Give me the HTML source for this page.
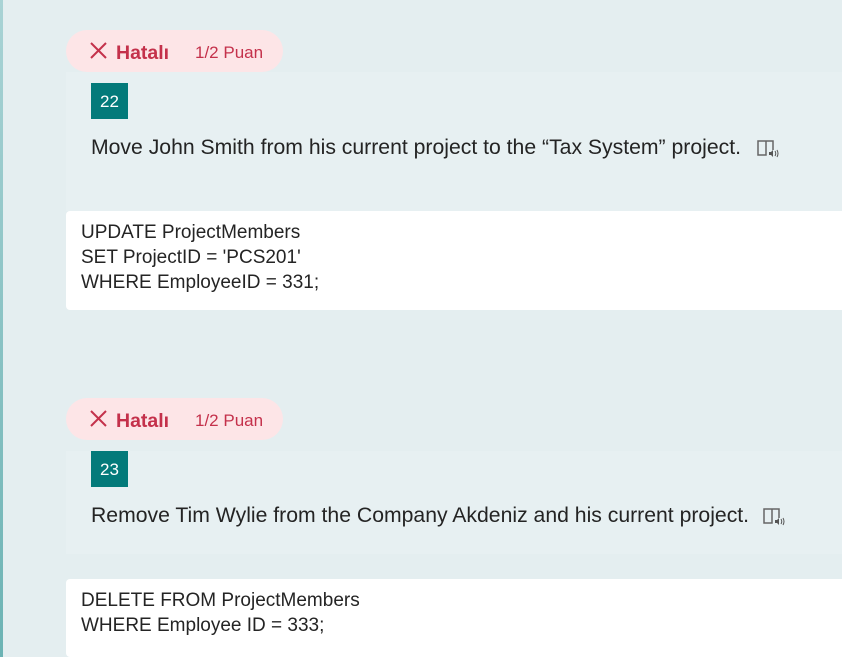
<!DOCTYPE html>
<html><head><meta charset="utf-8"><style>
body{margin:0;width:842px;height:657px;overflow:hidden;background:#e4eef0;font-family:"Liberation Sans",sans-serif;position:relative}
.stripe{position:absolute;left:0;top:0;width:3px;height:657px;background:linear-gradient(#a9d3d5,#6cb3b4)}
.a{position:absolute}
.pill{left:66px;width:217px;height:42px;border-radius:21px;background:#fde5e7}
.x{left:24px;top:12px;width:17px;height:17px}
.h{left:50px;top:12px;font-size:19.5px;font-weight:bold;color:#c4314b}
.p{left:129px;top:13px;font-size:17px;color:#c4314b}
.qb{left:66px;width:776px;background:#e7f0f2}
.badge{left:91px;width:37px;height:36px;background:#037a7a;color:#fff;font-size:17px;text-align:center;line-height:38px}
.q{left:91px;font-size:21.2px;color:#242424;white-space:nowrap}
.ans{left:66px;width:776px;background:#fff;border-radius:4px 0 0 4px;font-size:19px;color:#242424;padding:9px 0 0 15px;box-sizing:border-box;line-height:25px}
</style></head><body>
<div class="stripe"></div>
<div class="a qb" style="top:72px;height:139px"></div>
<div class="a pill" style="top:30px"><svg class="a x" viewBox="0 0 17 17"><path d="M1 1L16 16M16 1L1 16" stroke="#c4314b" stroke-width="2"/></svg><span class="a h">Hatalı</span><span class="a p">1/2 Puan</span></div>
<div class="a badge" style="top:83px">22</div>
<div class="a q" style="top:136px">Move John Smith from his current project to the “Tax System” project.</div>
<svg class="a" style="left:757px;top:140px" width="22" height="20" viewBox="0 0 22 20"><path d="M1 1H9V15H1ZM9 1H16V10" fill="none" stroke="#666" stroke-width="1.5"/><path d="M12 12h2l2-2v7l-2-2h-2z" fill="#555"/><path d="M18 11q1.5 2.5 0 5M20 10q2 3.5 0 7" fill="none" stroke="#555"/></svg>
<div class="a ans" style="top:211px;height:99px">UPDATE ProjectMembers<br>SET ProjectID = 'PCS201'<br>WHERE EmployeeID = 331;</div>

<div class="a qb" style="top:451px;height:103px"></div>
<div class="a pill" style="top:398px"><svg class="a x" viewBox="0 0 17 17"><path d="M1 1L16 16M16 1L1 16" stroke="#c4314b" stroke-width="2"/></svg><span class="a h">Hatalı</span><span class="a p">1/2 Puan</span></div>
<div class="a badge" style="top:451px">23</div>
<div class="a q" style="top:504px">Remove Tim Wylie from the Company Akdeniz and his current project.</div>
<svg class="a" style="left:763px;top:508px" width="22" height="20" viewBox="0 0 22 20"><path d="M1 1H9V15H1ZM9 1H16V10" fill="none" stroke="#666" stroke-width="1.5"/><path d="M12 12h2l2-2v7l-2-2h-2z" fill="#555"/><path d="M18 11q1.5 2.5 0 5M20 10q2 3.5 0 7" fill="none" stroke="#555"/></svg>
<div class="a ans" style="top:579px;height:78px">DELETE FROM ProjectMembers<br>WHERE Employee ID = 333;</div>
</body></html>
